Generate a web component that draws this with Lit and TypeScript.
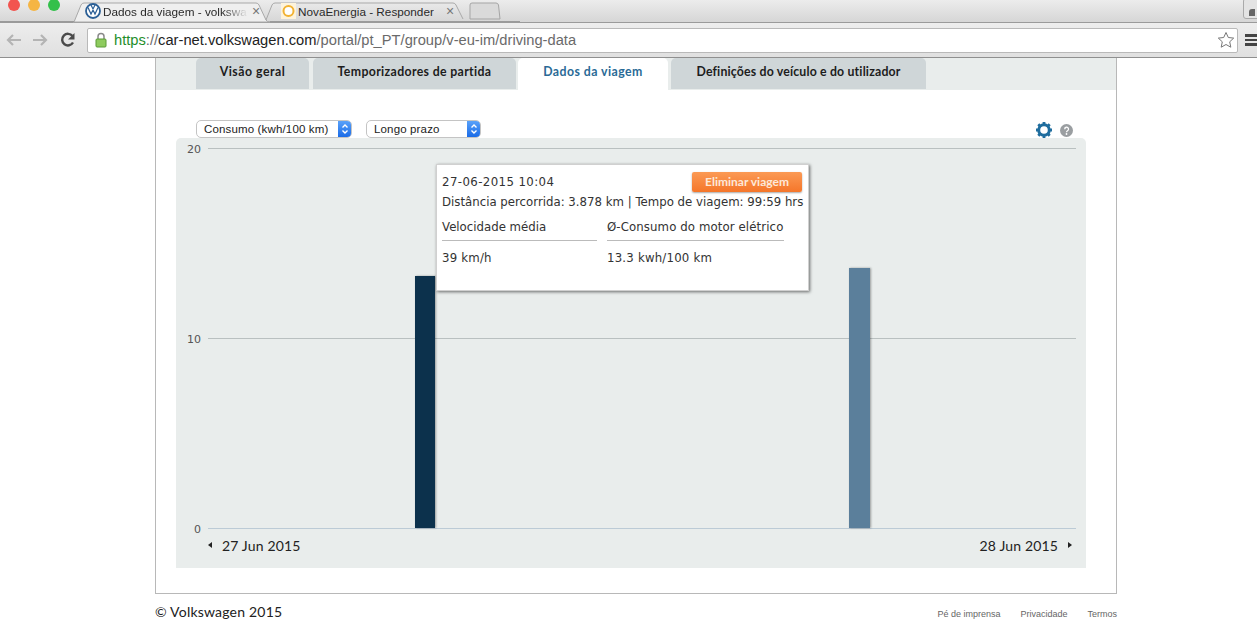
import { LitElement, html, css, svg } from "lit";
import { customElement } from "lit/decorators.js";

const stepper = html`<span class="step"><svg width="14" height="18" viewBox="0 0 14 18"><path d="M4.5 7.5 7 5l2.5 2.5M4.5 10.5 7 13l2.5-2.5" fill="none" stroke="#fff" stroke-width="1.4"/></svg></span>`;

@customElement("app-root")
export class AppRoot extends LitElement {
  static styles = css`
    :host { display: block; width: 1257px; height: 642px; overflow: hidden; background: #fff; font-family: "Lato", sans-serif; color: #222; }
    .browser { height: 57px; background: #d4d4d4; border-bottom: 1px solid #8f8f8f; display: flex; flex-direction: column; }
    .strip { height: 22px; position: relative; background: linear-gradient(#ececec, #d6d6d6); border-bottom: 1px solid #9a9a9a; flex: none; display: flex; }
    .strip svg.shapes { position: absolute; left: 0; top: 0; }
    .lights { position: absolute; left: 8px; top: 0; display: flex; gap: 8px; }
    .light { width: 12px; height: 12px; border-radius: 50%; margin-top: -1px; }
    .tabtext { position: absolute; top: 3px; height: 16px; display: flex; align-items: center; font: 11.75px "Liberation Sans", sans-serif; color: #2a2a2a; white-space: nowrap; overflow: hidden; }
    .tabtext.fade { -webkit-mask-image: linear-gradient(90deg, #000 82%, transparent); mask-image: linear-gradient(90deg, #000 82%, transparent); }
    .tabx { position: absolute; top: 3px; font: 14px "Liberation Sans", sans-serif; color: #777; line-height: 16px; }
    .fav { position: absolute; }
    .toolbar { flex: 1; display: flex; align-items: center; background: linear-gradient(#ededed, #e0e0e0); padding-left: 5px; }
    .nav { width: 28px; display: flex; }
    .reload { margin-left: 4px; margin-right: 11px; display: flex; }
    .address { width: 1151px; height: 25px; background: #fff; border: 1px solid #b9b9b9; border-radius: 2px; display: flex; align-items: center; padding-left: 7px; box-sizing: border-box; font: 14.7px "Liberation Sans", sans-serif; color: #6a6a6a; white-space: nowrap; flex: none; }
    .address .lock { margin-right: 7px; display: flex; }
    .https { color: #1e8e2a; }
    .host { color: #222; }
    .star { margin-left: auto; margin-right: 2px; display: flex; }
    .menu { margin-left: 7px; display: flex; flex-direction: column; gap: 2px; }
    .menu i { display: block; width: 12px; height: 2.5px; background: #444; }
    .profile { position: absolute; right: -4px; top: -2px; width: 16px; height: 19px; border: 1px solid #aaa; border-radius: 3px; background: #e4e4e4; }
    .profile i { display: block; width: 6px; height: 7px; margin: 10px 0 0 5px; background: #666; border-radius: 3px 0 0 0; }

    .card { width: 962px; height: 536px; margin-left: 155px; box-sizing: border-box; border: 1px solid #b8b8b8; border-top: none; display: flex; flex-direction: column; }
    .tabs { height: 32px; background: #e9edec; display: flex; padding-left: 40px; flex: none; box-sizing: border-box; }
    .tab { height: 31px; padding-bottom: 5px; background: #cfd6d8; border-radius: 5px 5px 0 0; display: flex; align-items: center; justify-content: center; font-weight: 700; font-size: 12.3px; letter-spacing: .35px; color: #1d1d1d; box-sizing: border-box; }
    .tab.on { background: #fff; color: #2a6a96; height: 32px; padding-bottom: 6px; letter-spacing: .45px; }
    .tab.wide { letter-spacing: .17px; }
    .tab.first { letter-spacing: .5px; }
    .controls { height: 48px; padding: 30px 43px 0 40px; display: flex; box-sizing: border-box; flex: none; align-items: flex-start; }
    .select { height: 18px; border: 1px solid #c4c4c4; border-radius: 5px; background: #fff; display: flex; align-items: center; justify-content: space-between; box-sizing: border-box; font: 11.5px "Liberation Sans", sans-serif; letter-spacing: .15px; color: #222; padding-left: 7px; overflow: hidden; }
    .step { width: 14px; height: 18px; margin-right: -1px; background: linear-gradient(#5da5fb, #1668e6); display: flex; flex: none; }
    .icons { margin-left: auto; display: flex; align-items: center; gap: 7px; margin-top: 1px; }
    .panel { margin-left: 20px; width: 910px; height: 430px; background: #e9edec; border-radius: 5px 5px 0 0; position: relative; flex: none; display: flex; flex-direction: column; }
    .plot { height: 391px; padding: 10px 10px 0 32px; box-sizing: border-box; position: relative; display: flex; flex-direction: column; justify-content: space-between; flex: none; }
    .gridline { height: 1px; background: #b9c0c0; position: relative; }
    .gridline.base { background: #bccbd6; }
    .gridline span { position: absolute; right: 100%; margin-right: 7px; top: -5px; font: 11px/14px "DejaVu Sans", sans-serif; color: #555; white-space: nowrap; }
    .bar { position: absolute; bottom: 1px; box-shadow: 1px 0 2px rgba(0,0,0,.35); }
    .dates { flex: 1; display: flex; align-items: flex-start; justify-content: space-between; padding: 7px 14px 0 32px; font-size: 14px; letter-spacing: .15px; color: #222; }
    .date { display: flex; align-items: center; gap: 10px; height: 18px; }
    .tri-l { border: 3px solid transparent; border-right: 4px solid #222; border-left: none; }
    .tri-r { border: 3px solid transparent; border-left: 4px solid #222; border-right: none; }
    .tip { position: absolute; left: 260px; top: 26px; width: 373px; height: 127px; background: #fff; box-sizing: border-box; border: 1px solid #d0d0d0; box-shadow: 1px 1px 3px rgba(0,0,0,.55); padding: 6px 6px 0 5px; font: 11.75px "DejaVu Sans", sans-serif; color: #333; }
    .tiphead { display: flex; justify-content: space-between; align-items: center; height: 21px; }
    .stamp { letter-spacing: .4px; }
    .btn { width: 110px; height: 20px; border-radius: 2px; background: linear-gradient(#fb9a55, #f5762a); font: 700 12px "Lato", sans-serif; display: flex; align-items: center; justify-content: center; box-shadow: 0 1px 2px rgba(0,0,0,.35); color: #fde8d8; }
    .dist { margin-top: 2px; white-space: nowrap; height: 16px; line-height: 16px; }
    .cols { display: flex; gap: 10px; margin-top: 10px; }
    .col .h { height: 20px; line-height: 14px; border-bottom: 1px solid #bbb; white-space: nowrap; }
    .col .h.motor { letter-spacing: .1px; }
    .col .v { margin-top: 9px; line-height: 16px; letter-spacing: .2px; }
    .footer { width: 962px; margin: 9px 0 0 155px; display: flex; align-items: center; justify-content: space-between; }
    .copy { font-size: 14px; letter-spacing: .2px; color: #222; }
    .links { display: flex; gap: 20px; margin-top: 4px; font: 9px "Liberation Sans", sans-serif; color: #666; }
  `;

  render() {
    return html`
      <div class="browser">
        <div class="strip">
          <svg class="shapes" width="520" height="23" viewBox="0 0 520 23">
            ${svg`<path d="M74 22 81 5q1-2 3-2h172q2 0 3 2l7 15q1 2 4 2h-197z" fill="#efefef" stroke="#a9a9a9"/>
            <path d="M266 20l6-15q1-2 3-2h178q2 0 3 2l7 14" fill="none" stroke="#a9a9a9"/>
            <path d="M470 5q0-2 2-2h24q2 0 2.500 2l1.500 14h-30z" fill="#dadada" stroke="#a5a5a5"/>
            <path d="M0 21.500H74M270 21.500H1257" stroke="#9a9a9a"/>`}
          </svg>
          <div class="lights">
            <div class="light" style="background:#f2544f"></div>
            <div class="light" style="background:#f5b544"></div>
            <div class="light" style="background:#33c04a"></div>
          </div>
          <svg class="fav" style="left:85px;top:3px" width="16" height="16" viewBox="0 0 16 16"><circle cx="8" cy="8" r="7" fill="#fff" stroke="#2b5f96" stroke-width="1.800"/><path d="M3 4.500 6 11l2-4 2 4 3-6.500M6 2l2 4 2-4" fill="none" stroke="#2b5f96" stroke-width="1.200"/></svg>
          <div class="tabtext fade" style="left:103px;width:145px">Dados da viagem - volkswa</div>
          <div class="tabx" style="left:252px">×</div>
          <svg class="fav" style="left:281px;top:3px" width="15" height="16" viewBox="0 0 15 16"><rect width="15" height="16" fill="#fdf3dc"/><circle cx="7.500" cy="8" r="5" fill="#fff" stroke="#f2b232" stroke-width="2"/></svg>
          <div class="tabtext" style="left:298px">NovaEnergia - Responder</div>
          <div class="tabx" style="left:446px">×</div>
          <div class="profile"><i></i></div>
        </div>
        <div class="toolbar">
          <span class="nav"><svg width="18" height="14" viewBox="0 0 18 14"><path d="M16 7H3M8 2 3 7l5 5" fill="none" stroke="#b4b4b4" stroke-width="2.200"/></svg></span>
          <span class="nav"><svg width="18" height="14" viewBox="0 0 18 14"><path d="M2 7h13M10 2l5 5-5 5" fill="none" stroke="#b4b4b4" stroke-width="2.200"/></svg></span>
          <span class="reload"><svg width="16" height="16" viewBox="0 0 16 16"><path d="M13 10.500A5.800 5.800 0 1 1 12.500 4" fill="none" stroke="#4a4a4a" stroke-width="2.400"/><path d="M14.500 1v6.500H8z" fill="#4a4a4a"/></svg></span>
          <div class="address">
            <span class="lock"><svg width="12" height="16" viewBox="0 0 12 16"><path d="M3 7V4.500a3 3 0 0 1 6 0V7" fill="none" stroke="#8a8a8a" stroke-width="1.500"/><rect x="1" y="7" width="10" height="8" rx="1" fill="#8ecb5e" stroke="#5b9a36"/></svg></span>
            <span><span class="https">https</span>://<span class="host">car-net.volkswagen.com</span>/portal/pt_PT/group/v-eu-im/driving-data</span>
            <span class="star"><svg width="18" height="18" viewBox="0 0 18 18"><path d="m9 1.500 2.300 5 5.400.6-4 3.700 1.100 5.400L9 13.500l-4.800 2.700 1.100-5.400-4-3.700 5.400-.6z" fill="#fff" stroke="#777"/></svg></span>
          </div>
          <div class="menu"><i></i><i></i><i></i></div>
        </div>
      </div>

      <div class="card">
        <div class="tabs">
          <div class="tab first" style="width:113px;margin-right:4px">Visão geral</div>
          <div class="tab" style="width:203px;margin-right:2px">Temporizadores de partida</div>
          <div class="tab on" style="width:150px;margin-right:3px">Dados da viagem</div>
          <div class="tab wide" style="width:255px">Definições do veículo e do utilizador</div>
        </div>
        <div class="controls">
          <div class="select" style="width:156px;margin-right:14px"><span>Consumo (kwh/100 km)</span>${stepper}</div>
          <div class="select" style="width:115px"><span>Longo prazo</span>${stepper}</div>
          <div class="icons">
            <svg width="18" height="18" viewBox="0 0 18 18"><circle cx="9" cy="9" r="5.300" fill="none" stroke="#1f6d9e" stroke-width="3"/><path d="M9 1v3M9 14v3M1 9h3M14 9h3M3.300 3.300l2.100 2.100M12.600 12.600l2.100 2.100M3.300 14.700l2.100-2.100M12.600 5.400l2.100-2.100" stroke="#1f6d9e" stroke-width="2.800"/></svg>
            <svg width="13" height="13" viewBox="0 0 13 13"><circle cx="6.500" cy="6.500" r="6.500" fill="#9a9ea1"/><path d="M4.700 5.200a1.900 1.900 0 1 1 2.800 1.600c-.7.400-1 .7-1 1.500" fill="none" stroke="#fff" stroke-width="1.300"/><circle cx="6.500" cy="10" r=".9" fill="#fff"/></svg>
          </div>
        </div>
        <div class="panel">
          <div class="plot">
            <div class="gridline"><span>20</span></div>
            <div class="gridline"><span>10</span></div>
            <div class="gridline base"><span>0</span></div>
            <div class="bar" style="left:239px;width:20px;height:252px;background:#0c314c"></div>
            <div class="bar" style="left:673px;width:21px;height:260px;background:#5b7f9b"></div>
          </div>
          <div class="dates">
            <div class="date"><i class="tri-l"></i>27 Jun 2015</div>
            <div class="date">28 Jun 2015<i class="tri-r"></i></div>
          </div>
          <div class="tip">
            <div class="tiphead"><span class="stamp">27-06-2015 10:04</span><span class="btn">Eliminar viagem</span></div>
            <div class="dist">Distância percorrida: 3.878 km | Tempo de viagem: 99:59 hrs</div>
            <div class="cols">
              <div class="col" style="width:155px"><div class="h">Velocidade média</div><div class="v">39 km/h</div></div>
              <div class="col" style="width:177px"><div class="h motor">Ø-Consumo do motor elétrico</div><div class="v">13.3 kwh/100 km</div></div>
            </div>
          </div>
        </div>
      </div>

      <div class="footer">
        <span class="copy">© Volkswagen 2015</span>
        <div class="links"><span>Pé de imprensa</span><span>Privacidade</span><span>Termos</span></div>
      </div>
    `;
  }
}
